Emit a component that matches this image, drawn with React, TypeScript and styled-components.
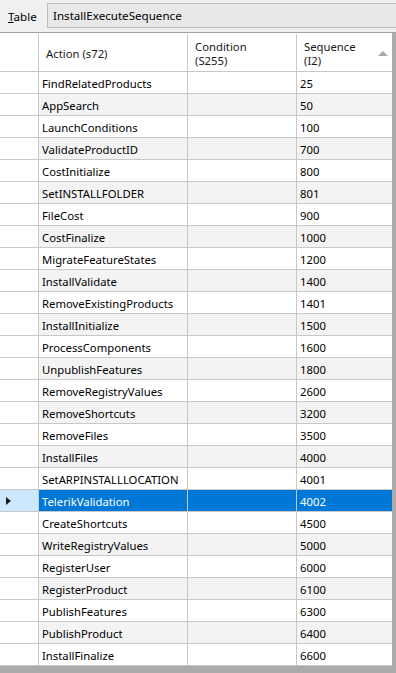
import React from "react";
import styled, { createGlobalStyle } from "styled-components";

const Global = createGlobalStyle`
  html, body { margin: 0; padding: 0; }
  body {
    background: #ababab;
    font-family: "Noto Sans", "Open Sans", sans-serif;
    font-size: 11.3px;
    color: #000;
    overflow: hidden;
  }
`;

const Page = styled.div`
  width: 396px;
  height: 673px;
  display: flex;
  flex-direction: column;
  background: #ababab;
`;

const Toolbar = styled.div`
  height: 32px;
  background: #f0f0f0;
  border-bottom: 1px solid #a0a0a0;
  display: flex;
  align-items: center;
  padding-left: 8px;
  gap: 11px;
  font-size: 11.6px;
`;

const Label = styled.span`
  width: 28px;
  u { text-decoration: underline; }
`;

const TextBox = styled.div`
  flex: 1;
  height: 23px;
  margin-top: -2px;
  background: #e8e8e8;
  border: 1px solid #bdbdbd;
  border-right: none;
  display: flex;
  align-items: center;
  padding-left: 5px;
`;

const Grid = styled.div`
  width: 392px;
  background: #fff;
`;

const cols = "39px 149px 109px 95px";

const HeaderRow = styled.div`
  display: grid;
  grid-template-columns: ${cols};
  height: 38px;
  border-bottom: 1px solid #c8c8c8;
  box-sizing: border-box;
  margin-top: 1px;
`;

const HeaderCell = styled.div<{ $last?: boolean }>`
  position: relative;
  border-right: ${(p) => (p.$last ? "none" : "1px solid #c8c8c8")};
  padding: 3px 0 0 7px;
  line-height: 14px;
  display: flex;
  flex-direction: column;
  justify-content: center;
  color: #1a1a1a;
`;

const SortArrow = styled.div`
  position: absolute;
  right: 4px;
  top: 17px;
  width: 0;
  height: 0;
  border-left: 5px solid transparent;
  border-right: 5px solid transparent;
  border-bottom: 5px solid #a8a8a8;
`;

const Row = styled.div<{ $alt: boolean }>`
  display: grid;
  grid-template-columns: ${cols};
  height: 22px;
  box-sizing: border-box;
  border-bottom: 1px solid #c8c8c8;
  background: ${(p) => (p.$alt ? "#f3f3f3" : "#fff")};
`;

const RowHeader = styled.div<{ $sel: boolean }>`
  border-right: 1px solid #c8c8c8;
  background: ${(p) => (p.$sel ? "#cce8ff" : "#fff")};
  display: flex;
  align-items: center;
  padding-left: 6px;
`;

const Marker = styled.div`
  width: 0;
  height: 0;
  border-top: 4px solid transparent;
  border-bottom: 4px solid transparent;
  border-left: 5px solid #1a1a1a;
`;

const Cell = styled.div<{ $sel: boolean; $last?: boolean }>`
  border-right: ${(p) => (p.$last ? "none" : "1px solid #c8c8c8")};
  background: ${(p) => (p.$sel ? "#0078d7" : "transparent")};
  color: ${(p) => (p.$sel ? "#fff" : "#000")};
  display: flex;
  align-items: center;
  padding: 1px 0 0 3px;
  white-space: nowrap;
  overflow: hidden;
`;

const rows: [string, number][] = [
  ["FindRelatedProducts", 25],
  ["AppSearch", 50],
  ["LaunchConditions", 100],
  ["ValidateProductID", 700],
  ["CostInitialize", 800],
  ["SetINSTALLFOLDER", 801],
  ["FileCost", 900],
  ["CostFinalize", 1000],
  ["MigrateFeatureStates", 1200],
  ["InstallValidate", 1400],
  ["RemoveExistingProducts", 1401],
  ["InstallInitialize", 1500],
  ["ProcessComponents", 1600],
  ["UnpublishFeatures", 1800],
  ["RemoveRegistryValues", 2600],
  ["RemoveShortcuts", 3200],
  ["RemoveFiles", 3500],
  ["InstallFiles", 4000],
  ["SetARPINSTALLLOCATION", 4001],
  ["TelerikValidation", 4002],
  ["CreateShortcuts", 4500],
  ["WriteRegistryValues", 5000],
  ["RegisterUser", 6000],
  ["RegisterProduct", 6100],
  ["PublishFeatures", 6300],
  ["PublishProduct", 6400],
  ["InstallFinalize", 6600],
];

export default function App() {
  return (
    <Page>
      <Global />
      <Toolbar>
        <Label>
          <u>T</u>able
        </Label>
        <TextBox>InstallExecuteSequence</TextBox>
      </Toolbar>
      <Grid>
        <HeaderRow>
          <HeaderCell />
          <HeaderCell>Action (s72)</HeaderCell>
          <HeaderCell>
            <span>Condition</span>
            <span>(S255)</span>
          </HeaderCell>
          <HeaderCell $last>
            <span>Sequence</span>
            <span>(I2)</span>
            <SortArrow />
          </HeaderCell>
        </HeaderRow>
        {rows.map(([name, seq], i) => {
          const sel = name === "TelerikValidation";
          return (
            <Row key={name} $alt={i % 2 === 1}>
              <RowHeader $sel={sel}>{sel && <Marker />}</RowHeader>
              <Cell $sel={sel}>{name}</Cell>
              <Cell $sel={sel} />
              <Cell $sel={sel} $last>
                {seq}
              </Cell>
            </Row>
          );
        })}
      </Grid>
    </Page>
  );
}
